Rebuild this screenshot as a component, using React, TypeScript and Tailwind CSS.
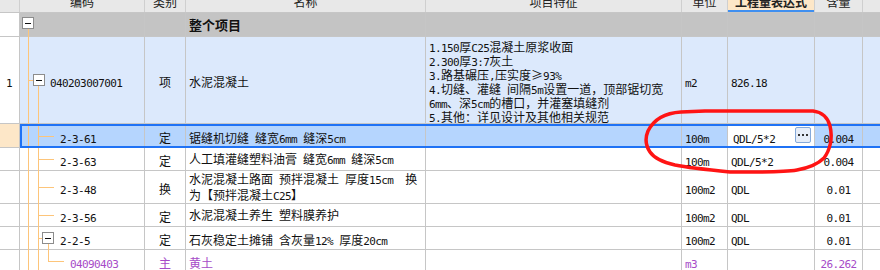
import React from "react";

const CJK_RE = /([\u2E80-\u9FFF\u3000-\u303F\uFF00-\uFFEF\u2265\u2A7E\u3010\u3011]+)/;

function T({ s, className = "" }: { s: string; className?: string }) {
  const parts = s.split(CJK_RE).filter((p) => p.length > 0);
  return (
    <span className={className}>
      {parts.map((p, i) =>
        CJK_RE.test(p) ? (
          <span key={i} className="font-['Noto_Sans_CJK_SC',sans-serif] text-[12px]">
            {p}
          </span>
        ) : (
          <span
            key={i}
            className="font-['DejaVu_Sans_Mono',monospace] text-[11px] tracking-[-0.6px] whitespace-pre"
          >
            {p}
          </span>
        )
      )}
    </span>
  );
}

const W = [
  "w-[20px]",
  "w-[125px]",
  "w-[41px]",
  "w-[240px]",
  "w-[256px]",
  "w-[46px]",
  "w-[87px]",
  "w-[48px]",
];

function Cell({
  i,
  className = "",
  children,
}: {
  i: number;
  className?: string;
  children?: React.ReactNode;
}) {
  return (
    <div
      className={`relative shrink-0 h-full border-r border-[#c6c6c6] flex items-center ${W[i]} ${className}`}
    >
      {children}
    </div>
  );
}

function Box({ className = "" }: { className?: string }) {
  return (
    <span
      className={`absolute w-[12px] h-[12px] border border-[#8c8c8c] bg-white flex items-center justify-center z-10 ${className}`}
    >
      <span className="block w-[6px] h-[1px] bg-[#111]" />
    </span>
  );
}

const VL1 = () => <span className="absolute left-[8px] top-0 bottom-[-1px] w-[1px] bg-[#fdc57a]" />;
const VL2 = () => <span className="absolute left-[18px] top-0 bottom-[-1px] w-[1px] bg-[#fdc57a]" />;
const HL = () => <span className="absolute left-[18px] top-1/2 w-[16px] h-[1px] bg-[#fdc57a]" />;

type Child = {
  code: string;
  type: string;
  name: string[];
  unit: string;
  expr: string;
  qty: string;
  h: string;
};

const children: Child[] = [
  {
    code: "2-3-63",
    type: "定",
    name: ["人工填灌缝塑料油膏 缝宽6mm 缝深5cm"],
    unit: "100m",
    expr: "QDL/5*2",
    qty: "0.004",
    h: "h-[23px]",
  },
  {
    code: "2-3-48",
    type: "换",
    name: ["水泥混凝土路面 预拌混凝土 厚度15cm  换", "为【预拌混凝土C25】"],
    unit: "100m2",
    expr: "QDL",
    qty: "0.01",
    h: "h-[33px]",
  },
  {
    code: "2-3-56",
    type: "定",
    name: ["水泥混凝土养生 塑料膜养护"],
    unit: "100m2",
    expr: "QDL",
    qty: "0.01",
    h: "h-[23px]",
  },
];

const features = [
  "1.150厚C25混凝土原浆收面",
  "2.300厚3:7灰土",
  "3.路基碾压,压实度≥93%",
  "4.切缝、灌缝 间隔5m设置一道，顶部锯切宽",
  "6mm、深5cm的槽口，并灌塞填缝剂",
  "5.其他：详见设计及其他相关规范",
];

export default function App() {
  const headers = ["", "编码", "类别", "名称", "项目特征", "单位", "工程量表达式", "含量"];
  return (
    <div className="relative w-[880px] h-[270px] overflow-hidden bg-white text-[#111] font-['Noto_Sans_CJK_SC',sans-serif]">
      {/* header */}
      <div className="flex h-[13px] border-b border-[#c6c6c6] bg-[#e8e8e8] overflow-hidden">
        {headers.map((h, i) => (
          <div
            key={i}
            className={`relative shrink-0 h-full border-r border-[#cfcfcf] flex justify-center overflow-hidden ${W[i]} ${
              i === 6 ? "bg-[#fde7c8] font-bold" : ""
            }`}
          >
            <span className="block -mt-[5px] leading-[14px] text-[12px] text-[#222]">{h}</span>
            {i === 6 && <span className="absolute left-0 right-0 bottom-0 h-[2px] bg-[#3f8ff0]" />}
          </div>
        ))}
        <div className="flex-1 h-full" />
      </div>

      {/* 整个项目 */}
      <div className="flex h-[24px] border-b border-[#c6c6c6]">
        <Cell i={0} className="bg-white" />
        <Cell i={1} className="bg-[#c4c4c4] border-[#b6b6b6]">
          <Box className="left-[2px] top-[4px]" />
          <span className="absolute left-[8px] top-[16px] bottom-[-1px] w-[1px] bg-[#fdc57a]" />
        </Cell>
        <Cell i={2} className="bg-[#c4c4c4] border-[#b6b6b6]" />
        <Cell i={3} className="bg-[#c4c4c4] border-[#b6b6b6] pl-[3px]">
          <span className="text-[13px] font-bold">整个项目</span>
        </Cell>
        <Cell i={4} className="bg-[#c4c4c4] border-[#b6b6b6]" />
        <Cell i={5} className="bg-[#c4c4c4] border-[#b6b6b6]" />
        <Cell i={6} className="bg-[#c4c4c4] border-[#b6b6b6]" />
        <Cell i={7} className="bg-[#c4c4c4] border-[#b6b6b6]" />
        <div className="flex-1 h-full bg-[#c4c4c4]" />
      </div>

      {/* row 1 */}
      <div className="flex h-[87px] border-b border-[#c6c6c6] bg-[#dce9fc]">
        <Cell i={0} className="bg-white pl-[6px]">
          <T s="1" />
        </Cell>
        <Cell i={1} className="pl-[30px]">
          <VL1 />
          <span className="absolute left-[8px] top-1/2 w-[5px] h-[1px] bg-[#fdc57a]" />
          <Box className="left-[13px] top-[37px]" />
          <span className="absolute left-[18px] top-[49px] bottom-[-1px] w-[1px] bg-[#fdc57a]" />
          <T s="040203007001" />
        </Cell>
        <Cell i={2} className="justify-center">
          <T s="项" />
        </Cell>
        <Cell i={3} className="pl-[3px]">
          <T s="水泥混凝土" />
        </Cell>
        <Cell i={4} className="pl-[3px] items-start">
          <div className="flex flex-col pt-[1px] leading-[14px]">
            {features.map((f, k) => (
              <div key={k} className="h-[14px] whitespace-nowrap">
                <T s={f} />
              </div>
            ))}
          </div>
        </Cell>
        <Cell i={5} className="pl-[3px]">
          <T s="m2" />
        </Cell>
        <Cell i={6} className="pl-[3px]">
          <T s="826.18" />
        </Cell>
        <Cell i={7} />
        <div className="flex-1 h-full" />
      </div>

      {/* selected row */}
      <div className="relative flex h-[24px] bg-[#b5d5fe]">
        <Cell i={0} className="bg-[#fde7c8] border-b border-[#c6c6c6]" />
        <Cell i={1} className="pl-[40px]">
          <VL1 />
          <VL2 />
          <HL />
          <T s="2-3-61" />
        </Cell>
        <Cell i={2} className="justify-center">
          <T s="定" />
        </Cell>
        <Cell i={3} className="pl-[3px]">
          <T s="锯缝机切缝 缝宽6mm 缝深5cm" />
        </Cell>
        <Cell i={4} />
        <Cell i={5} className="pl-[3px]">
          <T s="100m" />
        </Cell>
        <Cell i={6} className="pl-[5px] bg-white border-l border-r border-[#1f72f5] -ml-[1px] w-[88px]">
          <T s="QDL/5*2" />
          <span className="absolute right-[3px] top-[3px] w-[16px] h-[16px] rounded-[2px] border border-[#85a9d9] bg-[#e6edf8] flex items-center justify-center gap-[2px]">
            <span className="block w-[2px] h-[2px] bg-[#333]" />
            <span className="block w-[2px] h-[2px] bg-[#333]" />
            <span className="block w-[2px] h-[2px] bg-[#333]" />
          </span>
        </Cell>
        <Cell i={7} className="justify-center">
          <T s="0.004" />
        </Cell>
        <div className="flex-1 h-full" />
        <div className="absolute left-[20px] right-[-4px] top-0 bottom-0 border-2 border-[#1f72f5] pointer-events-none" />
      </div>

      {/* children */}
      {children.map((c, k) => (
        <div key={k} className={`flex ${c.h} border-b border-[#c6c6c6] bg-white`}>
          <Cell i={0} />
          <Cell i={1} className="pl-[40px]">
            <VL1 />
            <VL2 />
            <HL />
            <T s={c.code} />
          </Cell>
          <Cell i={2} className="justify-center">
            <T s={c.type} />
          </Cell>
          <Cell i={3} className="pl-[3px]">
            <div className="flex flex-col leading-[13px]">
              {c.name.map((n, j) => (
                <div key={j} className="whitespace-nowrap">
                  <T s={n} />
                </div>
              ))}
            </div>
          </Cell>
          <Cell i={4} />
          <Cell i={5} className="pl-[3px]">
            <T s={c.unit} />
          </Cell>
          <Cell i={6} className="pl-[3px]">
            <T s={c.expr} />
          </Cell>
          <Cell i={7} className="justify-center">
            <T s={c.qty} />
          </Cell>
          <div className="flex-1 h-full" />
        </div>
      ))}

      {/* 2-2-5 */}
      <div className="flex h-[23px] border-b border-[#c6c6c6] bg-white">
        <Cell i={0} />
        <Cell i={1} className="pl-[40px]">
          <VL1 />
          <VL2 />
          <span className="absolute left-[18px] top-1/2 w-[4px] h-[1px] bg-[#fdc57a]" />
          <Box className="left-[22px] top-[5px]" />
          <span className="absolute left-[28px] top-[16px] bottom-[-1px] w-[1px] bg-[#fdc57a]" />
          <T s="2-2-5" />
        </Cell>
        <Cell i={2} className="justify-center">
          <T s="定" />
        </Cell>
        <Cell i={3} className="pl-[3px]">
          <T s="石灰稳定土摊铺 含灰量12% 厚度20cm" />
        </Cell>
        <Cell i={4} />
        <Cell i={5} className="pl-[3px]">
          <T s="100m2" />
        </Cell>
        <Cell i={6} className="pl-[3px]">
          <T s="QDL" />
        </Cell>
        <Cell i={7} className="justify-center">
          <T s="0.01" />
        </Cell>
        <div className="flex-1 h-full" />
      </div>

      {/* 04090403 */}
      <div className="flex h-[23px] border-b border-[#c6c6c6] bg-white text-[#a64bc8]">
        <Cell i={0} />
        <Cell i={1} className="pl-[50px]">
          <VL1 />
          <VL2 />
          <span className="absolute left-[28px] top-0 h-[11px] w-[1px] bg-[#fdc57a]" />
          <span className="absolute left-[28px] top-[11px] w-[16px] h-[1px] bg-[#fdc57a]" />
          <T s="04090403" />
        </Cell>
        <Cell i={2} className="justify-center">
          <T s="主" />
        </Cell>
        <Cell i={3} className="pl-[3px]">
          <T s="黄土" />
        </Cell>
        <Cell i={4} />
        <Cell i={5} className="pl-[3px]">
          <T s="m3" />
        </Cell>
        <Cell i={6} />
        <Cell i={7} className="justify-center">
          <T s="26.262" />
        </Cell>
        <div className="flex-1 h-full" />
      </div>

      {/* hand-drawn red circle annotation */}
      <svg
        className="absolute left-0 top-0 pointer-events-none"
        width={880}
        height={270}
        viewBox="0 0 880 270"
      >
        <path
          d="M648 131 C654 119 664 113 681 112 L705 111 L790 111 L813 111 C822 112 828 118 830 126 C833 138 830 150 824 158 C817 165 808 168 797 170 C785 172 770 172 750 172 L730 172 C710 170 690 168 675 165 C662 162 654 158 650 152 C646 146 645 138 648 131"
          fill="none"
          stroke="#ff1414"
          strokeWidth={3.5}
          strokeLinecap="round"
          strokeLinejoin="round"
        />
      </svg>
    </div>
  );
}
